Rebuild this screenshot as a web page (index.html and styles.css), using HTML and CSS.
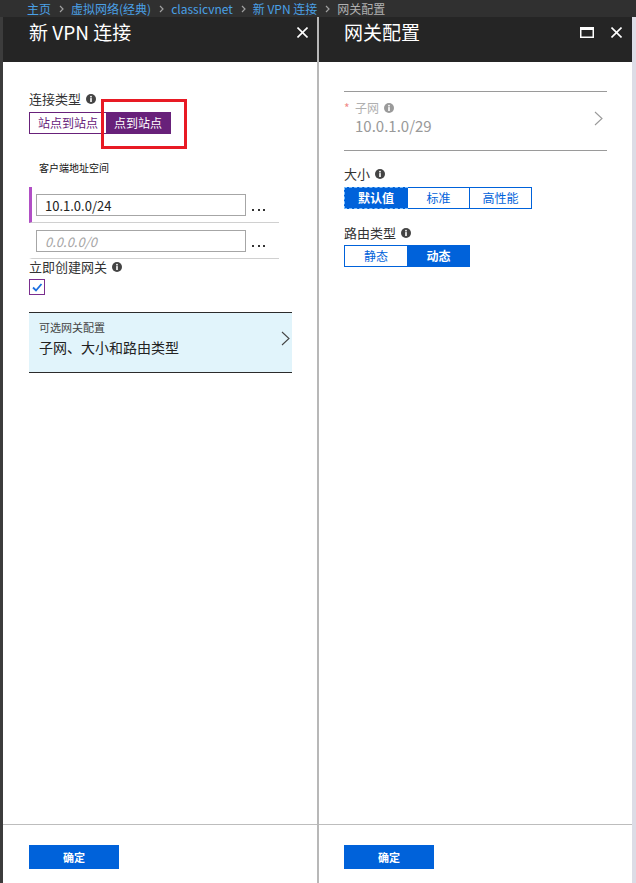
FILE: index.html
```html
<!doctype html>

<html>
 <head>
  <meta charset="utf-8">
  <title>网关配置</title>

  <link rel="stylesheet" href="styles.css">
 </head>

 <body>
  <div class="crumbs">
    <span>主页</span>
    <svg class="sep" viewBox="0 0 5 8"><polyline points="1,1 4,4 1,7"/></svg>
    <span>虚拟网络(经典)</span>
    <svg class="sep" viewBox="0 0 5 8"><polyline points="1,1 4,4 1,7"/></svg>
    <span>classicvnet</span>
    <svg class="sep" viewBox="0 0 5 8"><polyline points="1,1 4,4 1,7"/></svg>
    <span>新 VPN 连接</span>
    <svg class="sep" viewBox="0 0 5 8"><polyline points="1,1 4,4 1,7"/></svg>
    <span class="cur">网关配置</span>
  </div>

  <div class="blades">
   <div class="edge"></div>

   <!-- blade: new vpn connection -->
   <div class="blade blade-vpn">
    <div class="blade-head">
     <span class="blade-title">新 VPN 连接</span>
     <span class="head-icons">
      <svg class="ico-x" viewBox="0 0 11 11"><line x1="0.5" y1="0.5" x2="10.5" y2="10.5"/><line x1="10.5" y1="0.5" x2="0.5" y2="10.5"/></svg>
     </span>
    </div>

    <div class="blade-body">
     <div class="label">连接类型
      <svg class="info" viewBox="0 0 10 10"><circle cx="5" cy="5" r="5"/><circle class="i" cx="5" cy="2.7" r="0.9"/><rect class="i" x="4.2" y="4.1" width="1.6" height="3.9"/></svg>
     </div>
     <div class="seg-type">
      <span>站点到站点</span><span class="on">点到站点<b class="mark"></b></span>
     </div>

     <div class="addr-title">客户端地址空间</div>
     <div class="addr-row active">
      <input class="addr-input" type="text" value="10.1.0.0/24">
      <span class="more"><i></i><i></i><i></i></span>
     </div>
     <div class="addr-row">
      <input class="addr-input" type="text" placeholder="0.0.0.0/0">
      <span class="more"><i></i><i></i><i></i></span>
     </div>

     <div class="label">立即创建网关
      <svg class="info" viewBox="0 0 10 10"><circle cx="5" cy="5" r="5"/><circle class="i" cx="5" cy="2.7" r="0.9"/><rect class="i" x="4.2" y="4.1" width="1.6" height="3.9"/></svg>
     </div>
     <div class="check">
      <svg viewBox="0 0 14 14"><polyline points="3,7.5 6,10.5 11.5,4"/></svg>
     </div>

     <div class="opt">
      <div>
       <div class="opt-sub">可选网关配置</div>
       <div class="opt-main">子网、大小和路由类型</div>
      </div>
      <svg class="chev" viewBox="0 0 9 15"><polyline points="1,1 8,7.5 1,14"/></svg>
     </div>
    </div>

    <div class="blade-foot"><button class="ok">确定</button></div>
   </div>

   <div class="split"></div>

   <!-- blade: gateway configuration -->
   <div class="blade blade-gw">
    <div class="blade-head">
     <span class="blade-title">网关配置</span>
     <span class="head-icons">
      <svg class="ico-max" viewBox="0 0 14 11"><rect x="0.75" y="0.75" width="12.5" height="9.5"/><rect class="fill" x="0" y="0" width="14" height="3"/></svg>
      <svg class="ico-x" viewBox="0 0 11 11"><line x1="0.5" y1="0.5" x2="10.5" y2="10.5"/><line x1="10.5" y1="0.5" x2="0.5" y2="10.5"/></svg>
     </span>
    </div>

    <div class="blade-body">
     <div class="subnet">
      <div>
       <div class="subnet-label"><span class="req">*</span>子网
        <svg class="info dim" viewBox="0 0 10 10"><circle cx="5" cy="5" r="5"/><circle class="i" cx="5" cy="2.7" r="0.9"/><rect class="i" x="4.2" y="4.1" width="1.6" height="3.9"/></svg>
       </div>
       <div class="subnet-value">10.0.1.0/29</div>
      </div>
      <svg class="chev light" viewBox="0 0 9 15"><polyline points="1,1 8,7.5 1,14"/></svg>
     </div>

     <div class="label gap-size">大小
      <svg class="info" viewBox="0 0 10 10"><circle cx="5" cy="5" r="5"/><circle class="i" cx="5" cy="2.7" r="0.9"/><rect class="i" x="4.2" y="4.1" width="1.6" height="3.9"/></svg>
     </div>
     <div class="seg seg-size">
      <span class="on focus">默认值</span><span>标准</span><span>高性能</span>
     </div>

     <div class="label gap-route">路由类型
      <svg class="info" viewBox="0 0 10 10"><circle cx="5" cy="5" r="5"/><circle class="i" cx="5" cy="2.7" r="0.9"/><rect class="i" x="4.2" y="4.1" width="1.6" height="3.9"/></svg>
     </div>
     <div class="seg seg-route">
      <span>静态</span><span class="on">动态</span>
     </div>
    </div>

    <div class="blade-foot"><button class="ok">确定</button></div>
   </div>

   <div class="edge-right"></div>
  </div>
 </body>
</html>
```

FILE: styles.css
```css
* { box-sizing: border-box; }
html, body { margin: 0; height: 100%; }
body { background: #303030; font-family: "Noto Sans CJK SC", "Noto Sans", sans-serif; font-size: 13px; color: #333; display: flex; flex-direction: column; overflow: hidden; }

.crumbs { height: 17px; line-height: 17px; padding-left: 27px; font-size: 12px; color: #4aa0e6; display: flex; align-items: center; white-space: nowrap; }
.crumbs .sep { width: 5px; height: 8px; margin: 0 7px 0 8px; fill: none; stroke: #a0a0a0; stroke-width: 1.2; }
.crumbs .cur { color: #b0b0b0; }

.blades { flex: 1; display: flex; }
.edge { width: 3px; background: #3c3c3c; }
.edge-right { width: 4px; background: #dcdce6; }
.split { width: 2px; background: #b8b8b8; }

.blade { display: flex; flex-direction: column; background: #fff; }
.blade-vpn { width: 314px; }
.blade-gw { width: 313px; }

.blade-head { height: 45px; background: #252525; display: flex; justify-content: space-between; align-items: flex-start; padding-left: 26px; }
.blade-title { color: #fff; font-size: 19px; line-height: 24px; margin-top: 3px; }
.head-icons { display: flex; gap: 17px; margin-top: 10px; padding-right: 9px; }
.ico-x { width: 11px; height: 11px; stroke: #fff; stroke-width: 1.6; }
.ico-max { width: 14px; height: 11px; fill: none; stroke: #fff; stroke-width: 1.5; }
.ico-max .fill { fill: #fff; stroke: none; }

.blade-body { flex: 1; padding: 29px 0 0 26px; }
.blade-foot { height: 59px; border-top: 1px solid #bdbdbd; padding: 20px 0 0 26px; }
.blade-gw .blade-head, .blade-gw .blade-body, .blade-gw .blade-foot { padding-left: 25px; }
.blade-gw .head-icons { padding-right: 10px; }

.ok { width: 90px; height: 24px; border: 0; padding: 0; background: #0062da; color: #fff; font: bold 11px "Noto Sans CJK SC", sans-serif; }

.label { display: flex; align-items: center; height: 16px; line-height: 16px; font-size: 13px; color: #333; }
.info { width: 10px; height: 10px; margin-left: 5px; fill: #444; }
.info .i { fill: #fff; }
.info.dim { fill: #9a9a9a; }

.seg-type { display: inline-flex; margin-top: 5px; height: 22px; border: 1px solid #68217a; }
.seg-type span { padding: 0 8px; line-height: 20px; font-size: 12px; color: #68217a; }
.seg-type .on { position: relative; background: #68217a; color: #fff; }
.mark { position: absolute; left: -5px; top: -14px; width: 86px; height: 50px; border: 3px solid #e81a24; }

.addr-title { margin: 27px 0 12px 10px; font-size: 10px; line-height: 14px; color: #111; }
.addr-row { width: 250px; display: flex; align-items: flex-start; padding: 7px 0 6px 4px; border-left: 3px solid transparent; border-bottom: 1px solid #d0d0d0; }
.addr-row.active { border-left-color: #b14fc5; }
.addr-input { width: 210px; height: 22px; margin: 0; border: 1px solid #a6a6a6; padding: 0 8px; font: 13px "Noto Sans CJK SC", sans-serif; color: #222; outline: none; }
.addr-input::placeholder { color: #a6a6a6; font-style: italic; }
.more { display: flex; gap: 3.5px; margin: 15px 0 0 6px; }
.more i { width: 2px; height: 2px; background: #333; }

.check { width: 16px; height: 16px; margin-top: 4px; border: 1px solid #7a2e8e; }
.check svg { display: block; width: 14px; height: 14px; fill: none; stroke: #1a6fe0; stroke-width: 1.8; }

.opt { width: 263px; margin-top: 17px; padding: 7px 2px 15px 10px; display: flex; justify-content: space-between; align-items: center; background: #e1f4fb; border-top: 1px solid #2b2b2b; border-bottom: 1px solid #2b2b2b; }
.opt-sub { font-size: 11px; line-height: 14px; color: #444; }
.opt-main { margin-top: 3px; font-size: 14px; line-height: 20px; color: #222; }
.chev { width: 9px; height: 15px; fill: none; stroke: #444; stroke-width: 1.1; }
.chev.light { stroke: #999; }

.subnet { width: 263px; padding: 8px 4px 14px 0; display: flex; justify-content: space-between; align-items: center; border-top: 1px solid #9a9a9a; border-bottom: 1px solid #9a9a9a; }
.subnet-label { display: flex; align-items: center; height: 16px; line-height: 16px; font-size: 12px; color: #b0b0b0; }
.req { width: 11px; color: #f08a8a; }
.subnet-value { padding-left: 11px; font-size: 15px; line-height: 20px; color: #999; }

.gap-size { margin-top: 15px; }
.gap-route { margin-top: 16px; }
.seg { display: inline-flex; border: 1px solid #0062da; margin-top: 5px; }
.seg-route { margin-top: 4px; }
.seg span { width: 62px; height: 20px; line-height: 20px; text-align: center; font-size: 12px; color: #0062da; }
.seg span + span { border-left: 1px solid #0062da; }
.seg .on { background: #0062da; color: #fff; font-weight: bold; }
.seg .focus { outline: 1px dashed #7cc0ff; }
```
